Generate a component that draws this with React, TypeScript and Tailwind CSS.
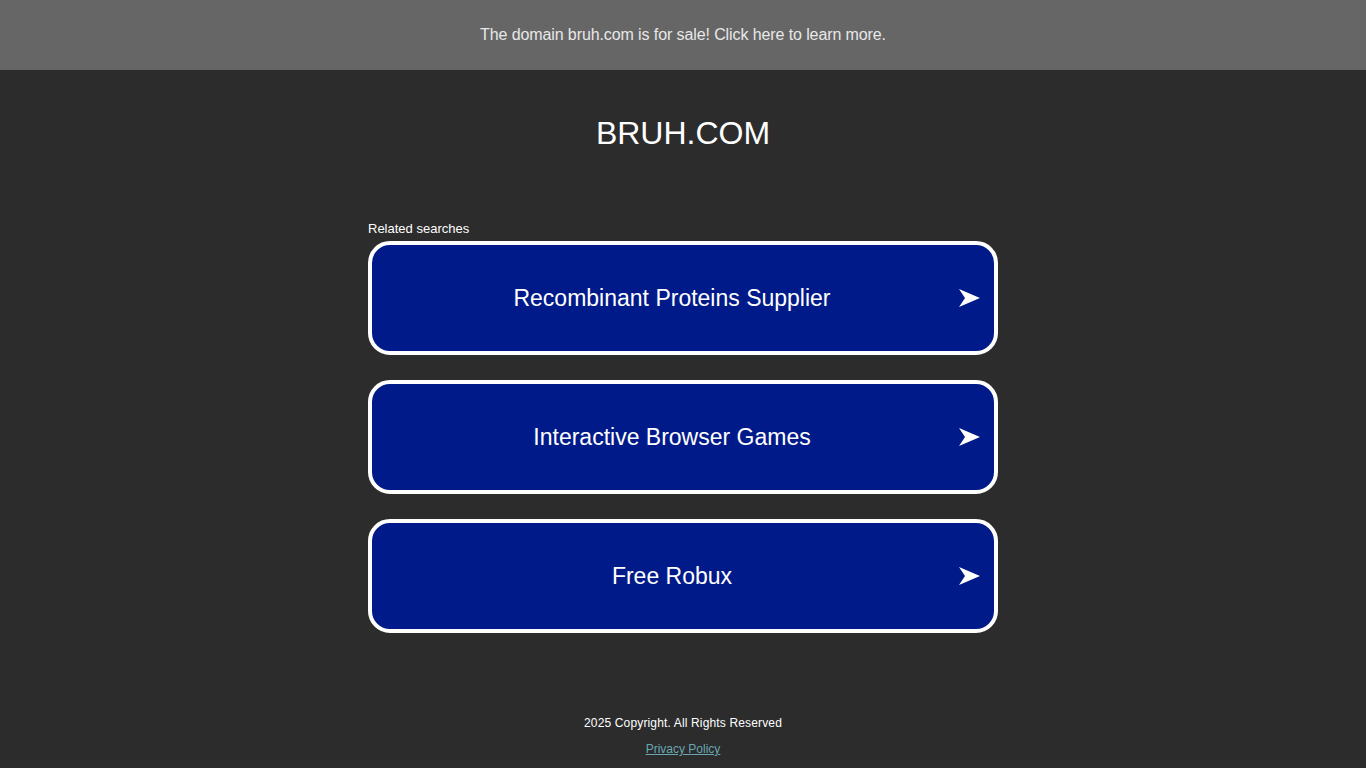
const searches = ['Recombinant Proteins Supplier', 'Interactive Browser Games', 'Free Robux'];

function Arrow() {
  return (
    <svg width="21" height="18" viewBox="0 0 21 18" className="absolute right-[14px] top-1/2 -translate-y-1/2">
      <path d="M0 0 L21 9 L0 18 L6 9 Z" fill="#ffffff" />
    </svg>
  );
}

export default function App() {
  return (
    <div className="min-h-screen bg-[#2c2c2c] font-['Liberation_Sans',Arial,sans-serif]">
      <div className="h-[70px] bg-[#666666] flex items-center justify-center text-[16px] text-[#e8e8e8] tracking-[-0.1px]">
        The domain bruh.com is for sale! Click here to learn more.
      </div>

      <h1 className="mt-[45px] text-center text-[32px] leading-[37px] text-white">BRUH.COM</h1>

      <div className="w-[630px] mx-auto mt-[69px]">
        <div className="text-[13px] leading-[15px] text-white mb-[5px]">Related searches</div>
        <div className="flex flex-col gap-[25px]">
          {searches.map((s) => (
            <div
              key={s}
              className="relative h-[114px] rounded-[22px] border-4 border-white bg-[#011a89] flex items-center text-white text-[23px]"
            >
              <span className="flex-1 text-center pr-[22px]">{s}</span>
              <Arrow />
            </div>
          ))}
        </div>
      </div>

      <div className="mt-[83px] text-center text-[12px] leading-[14px]">
        <div className="text-white tracking-[0.15px]">2025 Copyright. All Rights Reserved</div>
        <div className="mt-[12px]">
          <a href="#" className="underline text-[#6aa6b0]">Privacy Policy</a>
        </div>
      </div>
    </div>
  );
}
